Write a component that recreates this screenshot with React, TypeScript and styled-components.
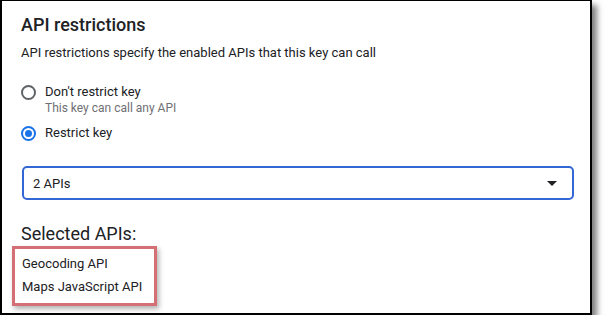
import React from 'react';
import styled, { createGlobalStyle } from 'styled-components';

const Colors = {
    text: '#202124',
    muted: '#5f6368',
    hint: '#6f6f74',
    blue: '#1a73e8',
    field: '#3367d6',
    highlight: '#d46f74',
    frame: '#000000',
};

const GlobalStyle = createGlobalStyle`
    html, body {
        margin: 0;
        padding: 0;
        background: #ffffff;
    }
    body {
        font-family: Roboto, 'Liberation Sans', sans-serif;
        color: ${Colors.text};
    }
`;

const apis = ['Geocoding API', 'Maps JavaScript API'];

function App() {
    return (
        <>
            <GlobalStyle />
            <Frame>
                <Title>API restrictions</Title>
                <Description>API restrictions specify the enabled APIs that this key can call</Description>

                <RadioGroup>
                    <RadioRow>
                        <Radio />
                        <RadioText>
                            <RadioLabel>Don't restrict key</RadioLabel>
                            <RadioHint>This key can call any API</RadioHint>
                        </RadioText>
                    </RadioRow>
                    <RadioRow>
                        <Radio $checked />
                        <RadioText>
                            <RadioLabel>Restrict key</RadioLabel>
                        </RadioText>
                    </RadioRow>
                </RadioGroup>

                <Select>
                    <SelectValue>2 APIs</SelectValue>
                    <Arrow />
                </Select>

                <SectionTitle>Selected APIs:</SectionTitle>
                <Highlight>
                    {apis.map((api) => (
                        <ApiItem key={api}>{api}</ApiItem>
                    ))}
                </Highlight>
            </Frame>
        </>
    );
}

//#region Frame
const Frame = styled.div`
    box-sizing: border-box;
    width: 592px;
    height: 315px;
    border: 2px solid ${Colors.frame};
    border-top-width: 1px;
    box-shadow: 5px 5px 6px rgba(0, 0, 0, 0.5);
    padding: 12px 19px 0;
    display: flex;
    flex-direction: column;
    background: #ffffff;
`;

const Title = styled.h1`
    margin: 0;
    font-size: 18px;
    line-height: 24px;
    font-weight: 500;
    color: ${Colors.text};
`;

const Description = styled.p`
    margin: 6px 0 0;
    font-size: 13px;
    line-height: 20px;
    color: ${Colors.text};
`;
//#endregion

//#region Radios
const RadioGroup = styled.div`
    display: flex;
    flex-direction: column;
    gap: 9px;
    margin-top: 20px;
`;

const RadioRow = styled.label`
    display: flex;
    align-items: flex-start;
    gap: 9px;
`;

const Radio = styled.span<{ $checked?: boolean }>`
    box-sizing: border-box;
    flex: none;
    width: 15px;
    height: 15px;
    margin-top: 2px;
    border-radius: 50%;
    border: 2px solid ${(p) => (p.$checked ? Colors.blue : Colors.muted)};
    display: flex;
    align-items: center;
    justify-content: center;

    &::after {
        content: '';
        display: ${(p) => (p.$checked ? 'block' : 'none')};
        width: 7px;
        height: 7px;
        border-radius: 50%;
        background: ${Colors.blue};
    }
`;

const RadioText = styled.div`
    display: flex;
    flex-direction: column;
`;

const RadioLabel = styled.span`
    font-size: 13px;
    line-height: 18px;
    color: ${Colors.text};
`;

const RadioHint = styled.span`
    font-size: 12px;
    line-height: 14px;
    color: ${Colors.hint};
`;
//#endregion

//#region Select
const Select = styled.div`
    box-sizing: border-box;
    display: flex;
    align-items: center;
    justify-content: space-between;
    height: 34px;
    margin: 24px 0 0 1px;
    width: 552px;
    padding: 0 15px 0 9px;
    border: 2px solid ${Colors.field};
    border-radius: 5px;
`;

const SelectValue = styled.span`
    font-size: 13px;
    color: ${Colors.text};
`;

const Arrow = styled.span`
    width: 0;
    height: 0;
    border-left: 5px solid transparent;
    border-right: 5px solid transparent;
    border-top: 5px solid ${Colors.text};
`;
//#endregion

//#region Selected
const SectionTitle = styled.h2`
    margin: 22px 0 0;
    font-size: 18px;
    line-height: 24px;
    font-weight: 400;
    color: ${Colors.text};
`;

const Highlight = styled.div`
    box-sizing: border-box;
    align-self: flex-start;
    width: 145px;
    height: 60px;
    margin: 0 0 0 -9px;
    padding: 6px 0 0 7px;
    border: 3px solid ${Colors.highlight};
    box-shadow: 2px 3px 5px rgba(0, 0, 0, 0.3);
    display: flex;
    flex-direction: column;
    gap: 5px;
`;

const ApiItem = styled.div`
    font-size: 13px;
    line-height: 18px;
    color: ${Colors.text};
`;
//#endregion

export default App;
